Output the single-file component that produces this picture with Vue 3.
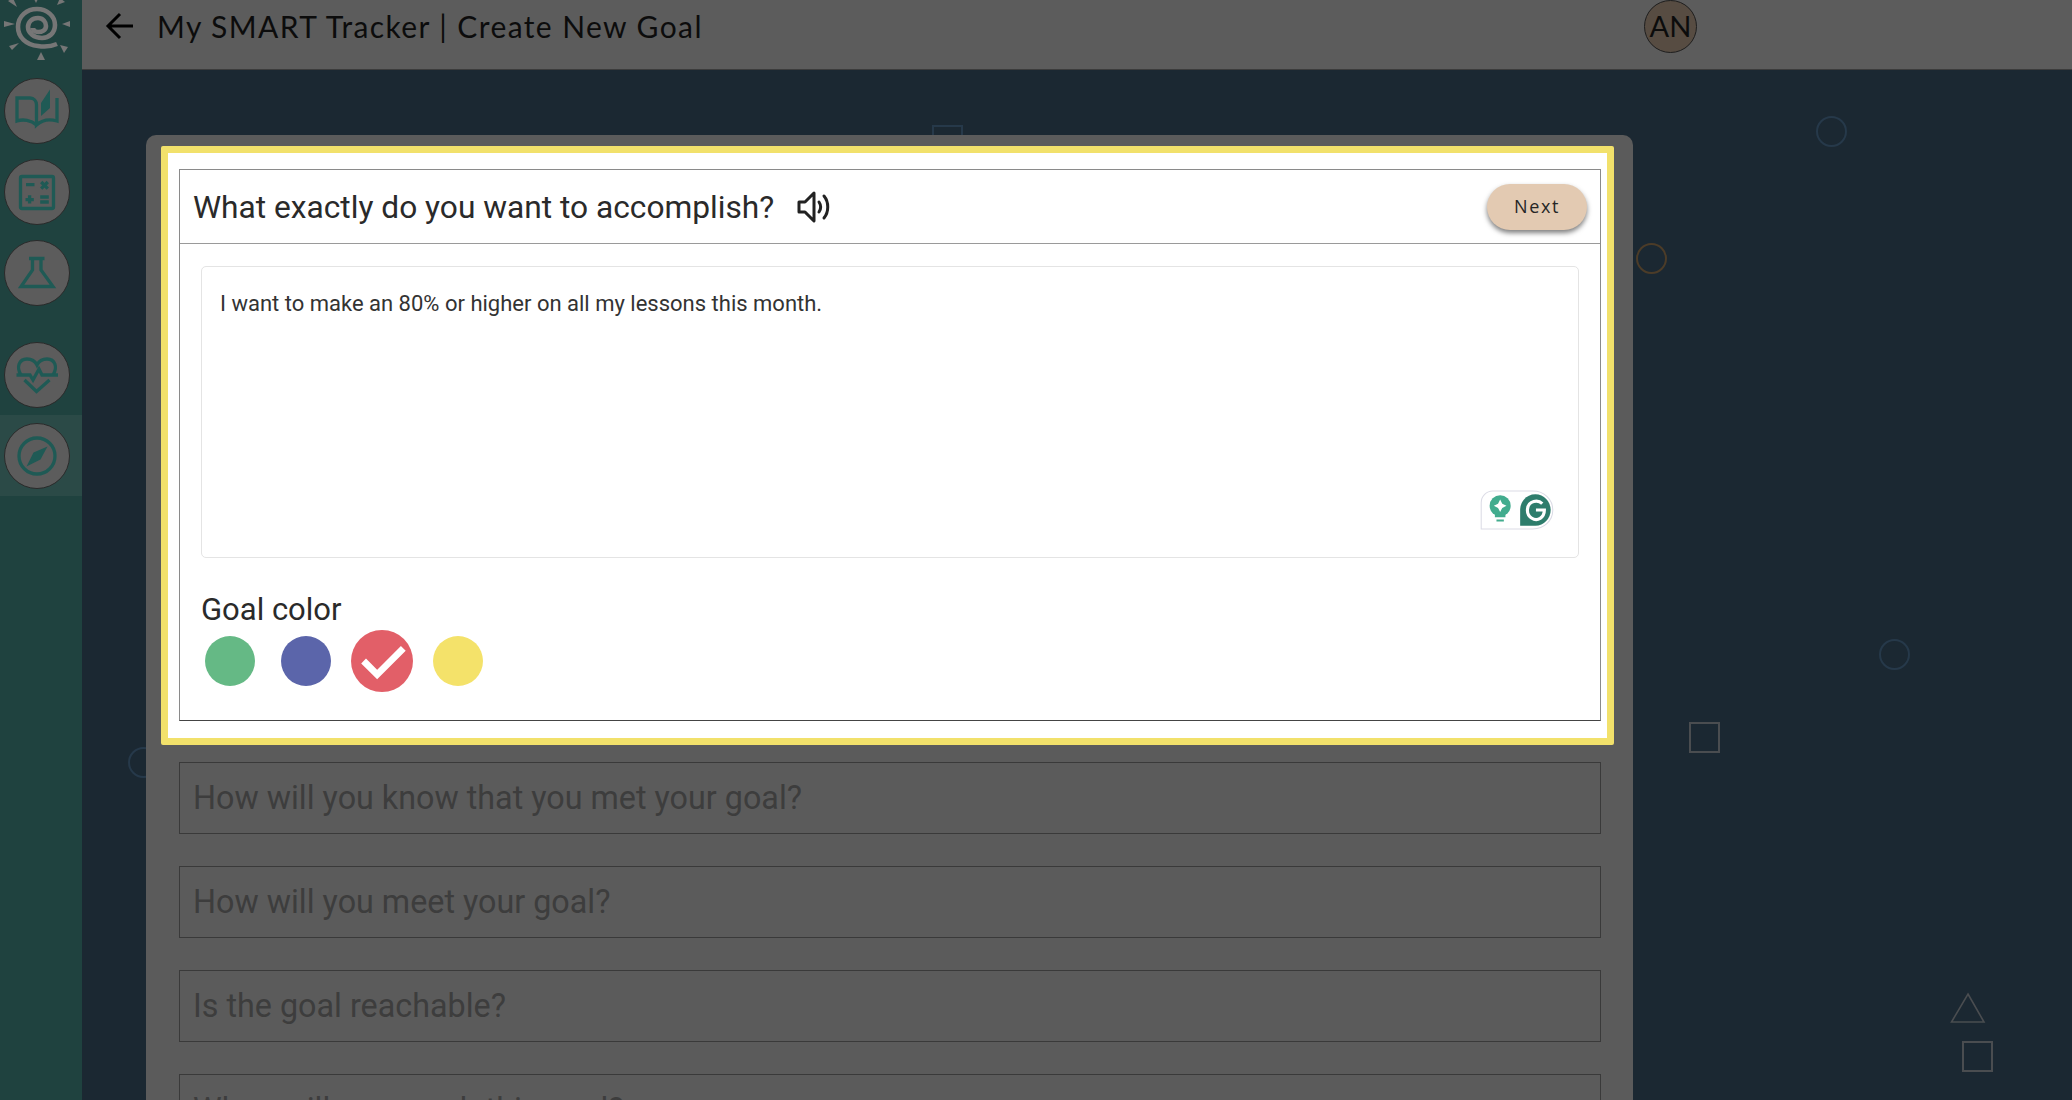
<script setup>
const navItems = [
  { id: 'reading', active: false, gap: false },
  { id: 'math', active: false, gap: false },
  { id: 'science', active: false, gap: false },
  { id: 'health', active: false, gap: true },
  { id: 'compass', active: true, gap: false },
]

const rays = [
  '41,52 37,60 45,60',
  '19,43 9,46 12,50',
  '60,45 68,47 64,53',
  '15,24 4,21 4,27',
  '62,24 70,21 70,27',
  '17,7 8,1 13,-2',
  '36,3 33,-3 39,-3',
  '57,5 60,-2 65,2',
]

const swatches = [
  { color: '#65b985', selected: false },
  { color: '#5b65aa', selected: false },
  { color: '#e25f68', selected: true },
  { color: '#f4e26a', selected: false },
]

const closedSteps = [
  'How will you know that you met your goal?',
  'How will you meet your goal?',
  'Is the goal reachable?',
  'When will you reach this goal?',
]

const shapes = [
  { id: 'c1', kind: 'circle', x: 1734, y: 46, color: '#26394a' },
  { id: 'c2', kind: 'circle', x: 1554, y: 173, color: '#4c3c28' },
  { id: 'c3', kind: 'circle', x: 1797, y: 569, color: '#26394a' },
  { id: 'c4', kind: 'circle', x: 46, y: 677, color: '#26394a' },
  { id: 's1', kind: 'square', x: 1607, y: 652, color: '#4a4d50' },
  { id: 's2', kind: 'square', x: 1880, y: 971, color: '#4a4d50' },
  { id: 's3', kind: 'square', x: 850, y: 55, color: '#26394a' },
]
</script>

<template>
  <div class="page">
    <aside class="sidebar">
      <svg class="logo" viewBox="0 0 82 70" fill="none">
        <path
          d="M57 44C50 47 44 47 38 46C26 45 18 37 18 27C18 16 27 9 37 9C47 9 55 16 55 25C55 33 49 38 42 38C34 38 28 33 28 27C28 22 32 18 38 18C43 18 46 22 46 26C46 30 42 32 38 32C35 32 33 30 33 28"
          stroke="#767676"
          stroke-width="4.6"
        />
        <polygon v-for="r in rays" :key="r" :points="r" fill="#767676" />
      </svg>
      <nav class="nav">
        <div
          v-for="item in navItems"
          :key="item.id"
          class="nav-row"
          :class="{ active: item.active, gap: item.gap }"
        >
          <div class="nav-btn">
            <svg v-if="item.id === 'reading'" viewBox="0 0 66 66" class="nav-icon">
              <path d="M32.5 47C27 42 19 41 13 43V20H26C30 20 32.5 23 32.5 27V47C38 42 46 41 53 43V20" />
              <path d="M37 25L46 11.5V30L37 38Z" class="fill" />
            </svg>
            <svg v-else-if="item.id === 'math'" viewBox="0 0 66 66" class="nav-icon">
              <rect x="16.5" y="17.5" width="33" height="32" rx="1.5" />
              <path d="M22 25.6H30.5M37.2 23L43.8 29.6M43.8 23L37.2 29.6M21.5 40.6H29.8M25.6 36.3V44.6M36.2 38H44.8M36.2 43H44.8" />
            </svg>
            <svg v-else-if="item.id === 'science'" viewBox="0 0 66 66" class="nav-icon">
              <path d="M25 18.5H40.5M28.5 18.5V30L17 46.5H49L37 30V18.5" />
            </svg>
            <svg v-else-if="item.id === 'health'" viewBox="0 0 66 66" class="nav-icon">
              <path d="M17 33C12 25 15 17 23 17C27 17 31 19 33 23C35 19 39 17 43 17C51 17 54 25 49 33" />
              <path d="M12.5 33H26L29 38L35 27L38 33H54M20.5 38L32.5 49.5L45.5 38" />
            </svg>
            <svg v-else viewBox="0 0 66 66" class="nav-icon">
              <circle cx="33" cy="33" r="18" />
              <path d="M43.5 23.5L36.5 36.5L22.5 43.5L29.5 29.5Z" class="fill" />
            </svg>
          </div>
        </div>
      </nav>
    </aside>

    <div class="content">
      <header class="topbar">
        <svg class="back" viewBox="0 0 28 28" fill="none" stroke="#000" stroke-width="3">
          <path d="M27 14H2M14 2L2 14L14 26" />
        </svg>
        <h1 class="page-title">My SMART Tracker | Create New Goal</h1>
        <div class="avatar">AN</div>
      </header>

      <main class="main">
        <span
          v-for="s in shapes"
          :key="s.id"
          class="shape"
          :class="s.kind"
          :style="{ left: s.x + 'px', top: s.y + 'px', borderColor: s.color }"
        ></span>
        <svg class="triangle" viewBox="0 0 36 32" fill="none" stroke="#4a4d50" stroke-width="1.6">
          <path d="M18 2L34 30H1.5Z" />
        </svg>

        <section class="panel">
          <div class="highlight">
            <div class="step-card">
              <div class="step-head">
                <h2 class="step-title">What exactly do you want to accomplish?</h2>
                <svg class="speaker" viewBox="0 0 34 32" fill="none" stroke="#222" stroke-width="3">
                  <path d="M2 11V21H8L17 30V2L8 11Z" stroke-linejoin="round" />
                  <path d="M22 11C24 14 24 18 22 21M27 5C32 11 32 21 27 27" stroke-linecap="round" />
                </svg>
                <button class="next-btn">Next</button>
              </div>
              <div class="step-body">
                <div class="answer">
                  I want to make an 80% or higher on all my lessons this month.
                  <div class="grammarly">
                    <svg viewBox="0 0 70 38" class="grammarly-icon">
                      <path d="M12 1H50C61 1 69 9 69 19C69 29 61 37 50 37H1V12C1 6 6 1 12 1Z" fill="#fff" stroke="#dcdce6" stroke-width="1" />
                      <circle cx="19" cy="15" r="10" fill="#42ac8e" />
                      <path d="M14 22H24V26H14ZM15.5 28H22.5V30H15.5Z" fill="#42ac8e" />
                      <path d="M19 9L21 13L25 15L21 17L19 21L17 17L13 15L17 13Z" fill="#fff" />
                      <g transform="translate(2 0)">
                        <path d="M50.5 4C42 4 36 11 36 19V34H50.5C58.5 34 65 27 65 19C65 11 58.5 4 50.5 4Z" fill="#2e7d6c" />
                        <path d="M57 13C53 9 44 10 43 18C42 26 50 30 55 27C58 25 59 22 59 19H51" fill="none" stroke="#fff" stroke-width="3" />
                      </g>
                    </svg>
                  </div>
                </div>
                <h3 class="color-label">Goal color</h3>
                <div class="swatches">
                  <span
                    v-for="s in swatches"
                    :key="s.color"
                    class="swatch"
                    :class="{ selected: s.selected }"
                    :style="{ background: s.color }"
                  >
                    <svg v-if="s.selected" viewBox="0 0 64 64" class="check" fill="none" stroke="#fff" stroke-width="7">
                      <path d="M13 32L27 46L54 19" />
                    </svg>
                  </span>
                </div>
              </div>
            </div>
          </div>

          <div class="closed-list">
            <div v-for="step in closedSteps" :key="step" class="closed-step">{{ step }}</div>
          </div>
        </section>
      </main>
    </div>
  </div>
</template>

<style>
html, body {
  margin: 0;
  height: 100%;
  overflow: hidden;
  background: #1b2832;
}
</style>

<style scoped>
.page {
  display: flex;
  height: 1100px;
  overflow: hidden;
  font-family: Roboto, "Liberation Sans", sans-serif;
}

.sidebar {
  width: 82px;
  flex-shrink: 0;
  background: #1f423f;
}

.logo {
  display: block;
  width: 82px;
  height: 70px;
}

.nav {
  display: flex;
  flex-direction: column;
}

.nav-row {
  height: 81px;
  display: flex;
  align-items: center;
  padding-left: 4px;
}

.nav-row.gap {
  margin-top: 21px;
}

.nav-row.active {
  background: #2b4a47;
}

.nav-btn {
  width: 66px;
  height: 66px;
  box-sizing: border-box;
  border-radius: 50%;
  background: #5c5c5c;
  border: 1px solid #2a2a2a;
  display: flex;
  align-items: center;
  justify-content: center;
}

.nav-icon {
  width: 66px;
  height: 66px;
  flex-shrink: 0;
  fill: none;
  stroke: #1f5a55;
  stroke-width: 3.3;
}

.nav-icon .fill {
  fill: #1f5a55;
  stroke: none;
}

.content {
  flex: 1;
  display: flex;
  flex-direction: column;
  min-width: 0;
}

.topbar {
  height: 70px;
  box-sizing: border-box;
  flex-shrink: 0;
  display: flex;
  align-items: center;
  padding-bottom: 17px;
  background: #5c5c5c;
  border-bottom: 1px solid #3c3c3c;
  position: relative;
}

.back {
  width: 30px;
  height: 28px;
  margin-left: 23px;
}

.page-title {
  margin: 0 0 0 22px;
  font-family: Lato, sans-serif;
  font-size: 30px;
  font-weight: 400;
  letter-spacing: 1.4px;
  color: #0c0c0c;
}

.avatar {
  position: absolute;
  left: 1562px;
  top: 0;
  width: 53px;
  height: 53px;
  box-sizing: border-box;
  border-radius: 50%;
  background: #574c42;
  border: 1px solid #1e1e1e;
  display: flex;
  align-items: center;
  justify-content: center;
  padding-bottom: 2px;
  font-family: Lato, sans-serif;
  font-size: 29px;
  color: #0c0c0c;
}

.main {
  flex: 1;
  background: #1b2832;
  position: relative;
  padding: 65px 0 0 64px;
  overflow: hidden;
}

.shape {
  position: absolute;
  box-sizing: border-box;
  width: 31px;
  height: 31px;
  border: 2px solid;
}

.shape.circle {
  border-radius: 50%;
}

.triangle {
  position: absolute;
  left: 1868px;
  top: 922px;
  width: 36px;
  height: 32px;
}

.panel {
  position: relative;
  width: 1487px;
  background: #5b5b5b;
  border-radius: 10px 10px 0 0;
  padding: 11px 0 0 15px;
  box-sizing: border-box;
  min-height: 965px;
}

.highlight {
  width: 1453px;
  box-sizing: border-box;
  padding: 16px 6px 17px 11px;
  background: #fff;
  border: 7px solid #f2e16b;
  border-radius: 2px;
}

.step-card {
  border: 1px solid #8a8a8a;
  border-bottom-color: #444;
  background: #fff;
}

.step-head {
  display: flex;
  align-items: center;
  height: 73px;
  padding: 0 13px 0 13px;
  border-bottom: 1px solid #9a9a9a;
}

.step-title {
  margin: 0;
  padding-top: 2px;
  font-size: 31.7px;
  font-weight: 400;
  color: #2a2a2a;
}

.speaker {
  width: 34px;
  height: 32px;
  margin-left: 23px;
}

.next-btn {
  margin-left: auto;
  width: 100px;
  height: 46px;
  padding: 0 0 2px;
  border: none;
  border-radius: 23px;
  background: #e3cab2;
  color: #262626;
  font-family: "Open Sans", sans-serif;
  font-size: 18px;
  letter-spacing: 1.6px;
  box-shadow: 0 3px 5px rgba(0, 0, 0, 0.5);
}

.step-body {
  padding: 22px 21px 28px;
}

.answer {
  position: relative;
  height: 292px;
  padding: 25px 18px 0;
  box-sizing: border-box;
  border: 1px solid #e4e4e4;
  border-radius: 5px;
  font-size: 22px;
  line-height: 24px;
  color: #333;
}

.grammarly {
  position: absolute;
  right: 24px;
  bottom: 27px;
  width: 74px;
  height: 40px;
}

.grammarly-icon {
  display: block;
  width: 100%;
  height: 100%;
}

.color-label {
  margin: 34px 0 0;
  font-size: 31px;
  font-weight: 400;
  line-height: 36px;
  color: #2a2a2a;
}

.swatches {
  display: flex;
  align-items: center;
  gap: 26px;
  margin-top: 2px;
  padding-left: 4px;
}

.swatch {
  width: 50px;
  height: 50px;
  border-radius: 50%;
  display: flex;
  align-items: center;
  justify-content: center;
  flex-shrink: 0;
}

.swatch.selected {
  width: 62px;
  height: 62px;
  margin: 0 -6px;
}

.check {
  width: 62px;
  height: 62px;
}

.closed-list {
  display: flex;
  flex-direction: column;
  gap: 32px;
  margin-top: 17px;
  margin-left: 18px;
}

.closed-step {
  box-sizing: border-box;
  width: 1422px;
  height: 72px;
  display: flex;
  align-items: center;
  padding-left: 13px;
  border: 1px solid #3a3a3a;
  font-size: 32.3px;
  color: #3d3d3d;
}
</style>
